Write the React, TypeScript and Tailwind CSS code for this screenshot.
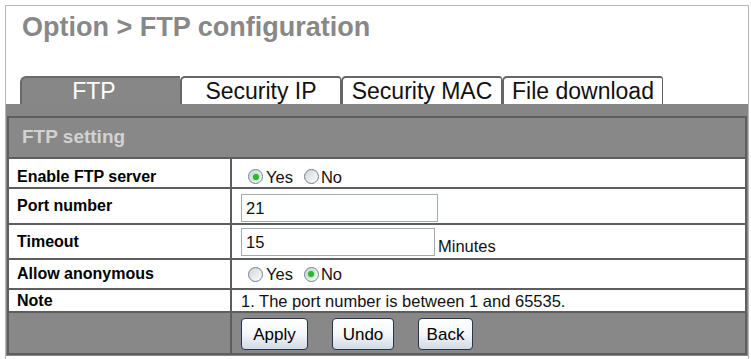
import React from "react";

const font = "font-['Liberation_Sans',Arial,sans-serif]";

const Radio = ({ checked }: { checked?: boolean }) => (
  <span className="inline-flex items-center justify-center w-[15px] h-[15px] rounded-full border border-[#6f8194] bg-linear-to-br from-[#cfd3d8] to-white shrink-0">
    {checked && (
      <span className="w-[6px] h-[6px] rounded-full bg-[#2fb52f] shadow-[0_0_2px_1px_#a8e6a8]" />
    )}
  </span>
);

const YesNo = ({ yes }: { yes: boolean }) => (
  <div className="flex items-center text-[16.5px] leading-[18px] text-[#111] ml-[7px]">
    <Radio checked={yes} />
    <span className="ml-[3px]">Yes</span>
    <span className="ml-[11px] flex">
      <Radio checked={!yes} />
    </span>
    <span className="ml-[2px]">No</span>
  </div>
);

const Row = ({
  label,
  h,
  children,
  pt = "",
}: {
  label: string;
  h: string;
  children: React.ReactNode;
  pt?: string;
}) => (
  <div className={`flex border-t-2 border-[#5e5e5e] bg-white ${h}`}>
    <div
      className={`w-[223px] border-r-2 border-[#5e5e5e] flex items-center pl-[8px] text-[16px] font-bold text-black leading-[18px] ${pt}`}
    >
      {label}
    </div>
    <div className={`flex-1 flex items-center pl-[9px] ${pt}`}>{children}</div>
  </div>
);

const Btn = ({ label, w }: { label: string; w: string }) => (
  <button
    className={`${w} h-[32px] rounded-[4px] border border-[#27364f] bg-linear-to-b from-white via-[#f4f6f9] to-[#d3dae4] text-[17px] text-black leading-none`}
  >
    {label}
  </button>
);

const tabs = [
  { label: "Security IP", w: "w-[161px]" },
  { label: "Security MAC", w: "w-[161px]" },
  { label: "File download", w: "w-[161px]" },
];

export default function App() {
  return (
    <div className={`w-[751px] h-[359px] bg-white overflow-hidden pt-[5px] ${font}`}>
      <div className="ml-[5px] w-[744px] h-[360px] border border-[#b7b7b7]">
        <div className="pt-[6px] pl-[16px] text-[27px] leading-[31px] font-bold text-[#888888]">
          Option &gt; FTP configuration
        </div>

        {/* tabs */}
        <div className="mt-[33px] pl-[14px] flex items-end">
          <div className="w-[160px] h-[28px] bg-[#878787] border-t-2 border-l-2 border-[#6a6a6a] rounded-tl-[6px] flex justify-center pr-[14px] text-[23px] leading-[26px] text-white">
            FTP
          </div>
          {tabs.map((t) => (
            <div
              key={t.label}
              className={`${t.w} h-[28px] bg-white border-t-2 border-l-2 border-r border-[#666666] rounded-tl-[5px] rounded-tr-[3px] flex justify-center text-[23px] leading-[26px] text-[#111]`}
            >
              {t.label}
            </div>
          ))}
        </div>

        {/* panel */}
        <div className="bg-[#868686] px-[1px] pt-[12px] pb-[1px]">
          <div className="border-2 border-t-0 border-[#5e5e5e]">
            <div className="border-t-2 border-[#5e5e5e] h-[41px] bg-[#888888] flex items-center pl-[13px] text-[19px] font-bold text-[#d2d2d2]">
              FTP setting
            </div>
            <Row label="Enable FTP server" h="h-[30px]" pt="pt-[7px]">
              <YesNo yes={true} />
            </Row>
            <Row label="Port number" h="h-[36px]">
              <div className="w-[197px] h-[28px] border border-[#a4abb4] bg-white pl-[4px] text-[16.5px] leading-[26px] text-[#111] mt-[3px]">
                21
              </div>
            </Row>
            <Row label="Timeout" h="h-[35px]">
              <div className="flex items-end">
                <div className="w-[194px] h-[28px] border border-[#a4abb4] bg-white pl-[4px] text-[16.5px] leading-[26px] text-[#111]">
                  15
                </div>
                <span className="ml-[3px] mb-[1px] text-[16.5px] leading-[18px] text-[#111]">
                  Minutes
                </span>
              </div>
            </Row>
            <Row label="Allow anonymous" h="h-[30px]">
              <YesNo yes={false} />
            </Row>
            <Row label="Note" h="h-[23px]">
              <span className="text-[16.5px] leading-[18px] text-[#111]">
                1. The port number is between 1 and 65535.
              </span>
            </Row>
            <div className="flex border-t-2 border-[#5e5e5e] bg-[#888888] h-[42px]">
              <div className="w-[223px] border-r-2 border-[#5e5e5e]" />
              <div className="flex-1 flex items-center pl-[9px] pt-[2px] gap-[24px]">
                <Btn label="Apply" w="w-[67px]" />
                <Btn label="Undo" w="w-[62px]" />
                <Btn label="Back" w="w-[55px]" />
              </div>
            </div>
          </div>
        </div>
      </div>
    </div>
  );
}
